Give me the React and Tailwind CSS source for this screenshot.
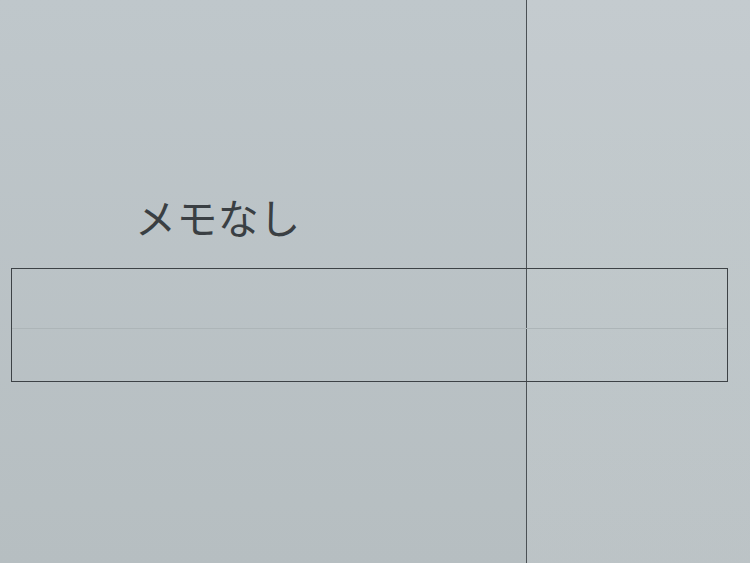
import React from "react";

// "no memo" empty state: split screen with an empty input box
export default function App() {
  return (
    <div
      className="h-[563px] w-[750px] overflow-hidden bg-[linear-gradient(90deg,transparent_526px,#4b5155_526px,#4b5155_527px,rgba(255,255,255,0.08)_527px),linear-gradient(180deg,#bfc7cb,#b6bec1)]"
      style={{ fontFamily: '"Noto Sans CJK JP", "Noto Sans", sans-serif' }}
    >
      <div className="pt-[194px] pl-[135px]">
        <h1 className="text-[41px] leading-[44px] font-normal tracking-[0.01em] text-[#3a3f43]">
          メモなし
        </h1>
      </div>

      {/* empty box */}
      <div className="mt-[30px] ml-[11px] h-[114px] w-[717px] border border-[#3d4246]">
        <div className="h-[60px] border-b border-[#adb5b8]" />
      </div>
    </div>
  );
}
